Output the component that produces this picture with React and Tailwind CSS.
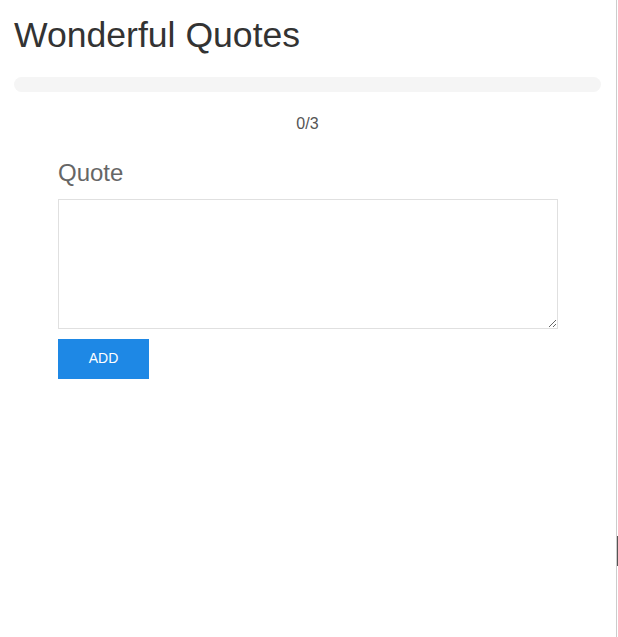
import { useState } from "react";

export default function App() {
  const [quote, setQuote] = useState("");
  const [quotes, setQuotes] = useState([]);
  const max = 3;

  const addQuote = () => {
    if (!quote.trim() || quotes.length >= max) return;
    setQuotes([...quotes, quote]);
    setQuote("");
  };

  return (
    <div className="flex min-h-[637px] bg-white font-['Liberation_Sans',Arial,sans-serif] text-[#333]">
      <div className="w-[616px] shrink-0">
        <div className="pl-[14px] pr-[15px]">
          <h1 className="mt-[16px] text-[35.6px] leading-[39.6px]">Wonderful Quotes</h1>
          <div className="mt-[21px] h-[15px] rounded-full bg-[#f5f5f5] overflow-hidden">
            <div
              className="h-full bg-[#1e88e5]"
              style={{ width: `${(quotes.length / max) * 100}%` }}
            />
          </div>
          <p className="mt-[20px] text-center text-[16px] text-[#555]">
            {quotes.length}/{max}
          </p>
        </div>

        <div className="mx-auto mt-[24px] w-[500px]">
          <label className="block text-[24px] leading-[1.1] text-[#666]">Quote</label>
          <textarea
            value={quote}
            onChange={(e) => setQuote(e.target.value)}
            className="mt-[13px] block h-[130px] w-[500px] border border-[#e0e0e0] p-2 text-[14px] outline-none"
          />
          <button
            onClick={addQuote}
            className="mt-[10px] h-[40px] w-[91px] bg-[#1e88e5] text-[14px] text-white"
          >
            ADD
          </button>
          <div className="mt-4 space-y-2">
            {quotes.map((q, i) => (
              <div key={i} className="border border-[#e0e0e0] p-3 text-[14px]">
                {q}
              </div>
            ))}
          </div>
        </div>
      </div>
      <div className="relative w-[2px] border-l border-[#cccccc]">
        <div className="absolute left-0 top-[536px] h-[30px] w-[1px] bg-[#555]" />
      </div>
    </div>
  );
}
